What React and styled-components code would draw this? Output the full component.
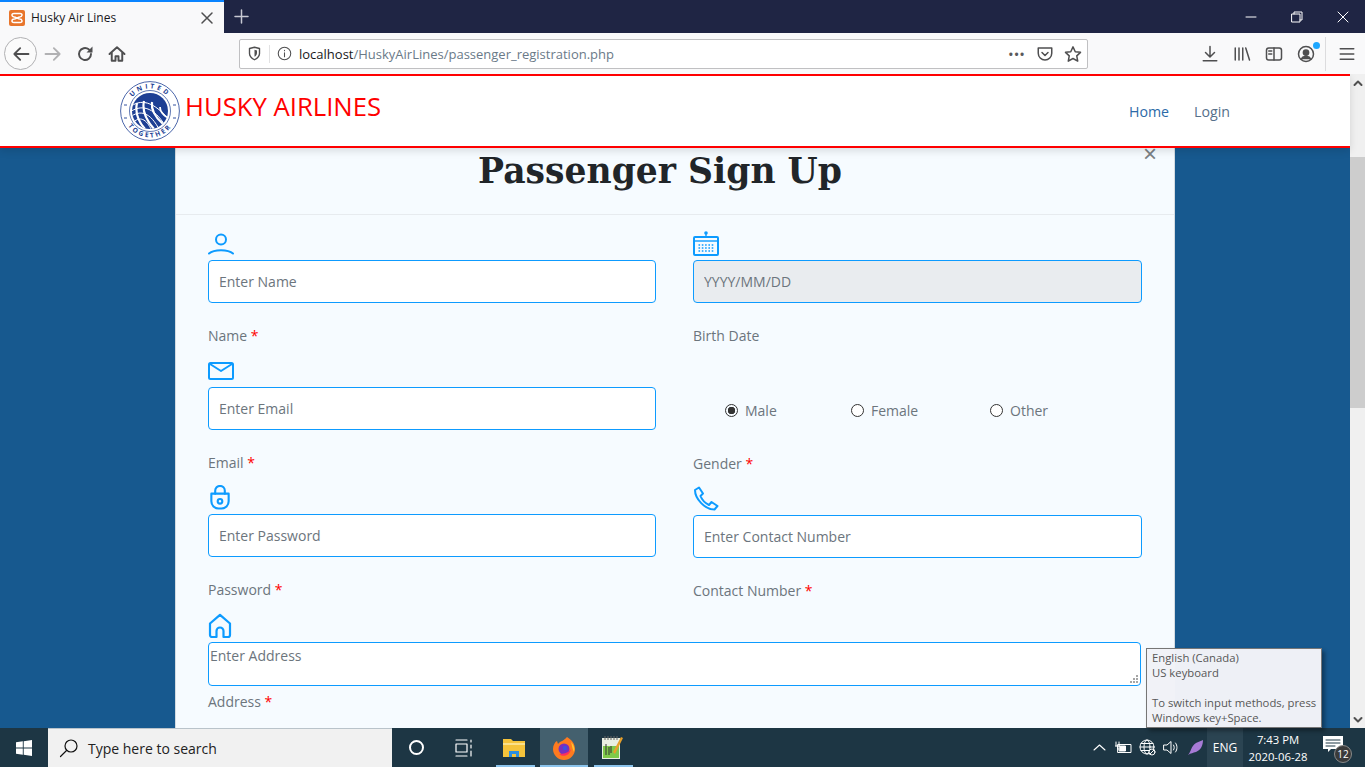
import styled, { createGlobalStyle } from "styled-components";

const BLUE = "#0d9bff";

const GlobalStyle = createGlobalStyle`
  html, body {
    margin: 0;
    padding: 0;
    overflow: hidden;
  }
  * {
    box-sizing: border-box;
  }
  body {
    font-family: "Open Sans", "Noto Sans", sans-serif;
  }
`;

function Ico({ size = 18, w, h, vb = "0 0 24 24", color = "#4f4f50", sw = 2, children }) {
  return (
    <svg
      width={w || size}
      height={h || size}
      viewBox={vb}
      fill="none"
      stroke={color}
      strokeWidth={sw}
      strokeLinecap="round"
      strokeLinejoin="round"
      style={{ display: "block", flex: "none" }}
    >
      {children}
    </svg>
  );
}

function XamppIcon() {
  return (
    <svg width="16" height="16" viewBox="0 0 16 16" style={{ display: "block", flex: "none" }}>
      <rect width="16" height="16" rx="2" fill="#e8752b" />
      <path
        d="M5 3.5 H11 M5 12.5 H11 M5 3.5 C2 3.5 2.5 7 5.5 7 M11 3.5 C14 3.5 13.5 7 10.5 7 M5 12.5 C2 12.5 2.5 9 5.5 9 M11 12.5 C14 12.5 13.5 9 10.5 9 M5.5 7 L10.5 9 M10.5 7 L5.5 9"
        fill="none"
        stroke="#fff"
        strokeWidth="1.5"
      />
    </svg>
  );
}

function GlobeLogo() {
  const navy = "#1d3f94";
  return (
    <svg width="60" height="60" viewBox="0 0 60 60" style={{ display: "block", flex: "none" }}>
      <defs>
        <path id="arcTop" d="M7.5 30 A22.5 22.5 0 0 1 52.5 30" />
        <path id="arcBottom" d="M3.5 30 A26.5 26.5 0 0 0 56.5 30" />
        <clipPath id="globeClip">
          <circle cx="30" cy="30" r="18" />
        </clipPath>
      </defs>
      <circle cx="30" cy="30" r="29.4" fill="#fff" stroke={navy} strokeWidth="0.8" />
      <circle cx="30" cy="30" r="20.5" fill="none" stroke={navy} strokeWidth="0.7" />
      <text fontFamily="Open Sans, sans-serif" fontSize="6.6" fontWeight="700" fill={navy} letterSpacing="2.6">
        <textPath href="#arcTop" startOffset="50%" textAnchor="middle">UNITED</textPath>
      </text>
      <text fontFamily="Open Sans, sans-serif" fontSize="6.6" fontWeight="700" fill={navy} letterSpacing="2.1">
        <textPath href="#arcBottom" startOffset="50%" textAnchor="middle">TOGETHER</textPath>
      </text>
      <circle cx="30" cy="30" r="18" fill={navy} />
      <g clipPath="url(#globeClip)" fill="none" stroke="#fff">
        <path d="M10 26 C20 18 33 19 50 40" strokeWidth="1" />
        <path d="M10 31 C20 24 33 24 46 46" strokeWidth="1" />
        <path d="M10 36 C20 29 30 30 40 50" strokeWidth="1" />
        <path d="M12 42 C20 35 26 37 32 50" strokeWidth="1" />
        <path d="M17 22 C15 31 18 40 25 48" strokeWidth="2.2" />
        <path d="M24 20 C22 29 26 39 34 48" strokeWidth="2.2" />
        <path d="M32 21 C31 28 35 36 43 43" strokeWidth="2.2" />
        <path d="M40 26 C40 30 43 34 48 37" strokeWidth="1.8" />
      </g>
      <path d="M4 37 h3 M53 37 h3 M4 24 h3 M53 24 h3" stroke={navy} strokeWidth="0.9" />
    </svg>
  );
}

function UserIcon() {
  return (
    <Ico w={26} h={22} vb="0 0 26 22" color={BLUE} sw={2}>
      <circle cx="13" cy="6.5" r="5" />
      <path d="M1 20.5 C6 16 20 16 25 20.5" />
    </Ico>
  );
}

function CalendarIcon() {
  return (
    <svg width="26" height="25" viewBox="0 0 26 25" style={{ display: "block" }}>
      <circle cx="13" cy="2" r="1.8" fill={BLUE} />
      <path d="M13 3 V6" stroke={BLUE} strokeWidth="1.4" />
      <rect x="1" y="6" width="24" height="18" rx="1" fill="none" stroke={BLUE} strokeWidth="2" />
      <path d="M1 10 H25" stroke={BLUE} strokeWidth="1.4" />
      <path d="M5.5 14 H21 M5.5 17 H21 M5.5 20 H21" stroke={BLUE} strokeWidth="1.6" strokeDasharray="1.6 1.7" />
    </svg>
  );
}

function MailIcon() {
  return (
    <Ico w={26} h={18} vb="0 0 26 18" color={BLUE} sw={2}>
      <rect x="1" y="1" width="24" height="16" rx="1.5" />
      <path d="M2 2 L13 9 L24 2" />
    </Ico>
  );
}

function LockIcon() {
  return (
    <Ico w={24} h={25} vb="0 0 24 26" color={BLUE} sw={2.2}>
      <path d="M7 9 V6 A5 5 0 0 1 17 6 V9" />
      <path d="M3 9 H21 V17 A7.5 7.5 0 0 1 13.5 24.5 H10.5 A7.5 7.5 0 0 1 3 17 Z" />
      <circle cx="12" cy="17" r="2.4" />
    </Ico>
  );
}

function PhoneIcon() {
  return (
    <Ico w={26} h={25} vb="0 0 26 25" color={BLUE} sw={2}>
      <path d="M2 4 L6 1.5 L10 7.5 L7.5 10 C9 14 12 17 16 19 L18.5 16 L24.5 20 L21.5 23.5 C12 23.5 2 13 2 4 Z" />
    </Ico>
  );
}

function HomeIcon() {
  return (
    <Ico w={24} h={26} vb="0 0 24 26" color={BLUE} sw={2.2}>
      <path d="M8.5 24 H4 A2 2 0 0 1 2 22 V10.5 L12 1.8 L22 10.5 V22 A2 2 0 0 1 20 24 H15.5 V18 A3.5 3.5 0 0 0 8.5 18 Z" />
    </Ico>
  );
}

function Field({ icon, placeholder, label, required, disabled }) {
  return (
    <FieldWrap>
      <IconSlot>{icon}</IconSlot>
      <TextInput placeholder={placeholder} readOnly $disabled={disabled} />
      <FieldLabel>
        {label}
        {required && <Req> *</Req>}
      </FieldLabel>
    </FieldWrap>
  );
}

export default function App() {
  return (
    <Root>
      <GlobalStyle />
      <TitleBar>
        <Tab>
          <XamppIcon />
          <TabTitle>Husky Air Lines</TabTitle>
          <Ico size={14} vb="0 0 14 14" sw={1.5}>
            <path d="M2 2 L12 12 M12 2 L2 12" />
          </Ico>
        </Tab>
        <NewTab>
          <Ico size={15} vb="0 0 15 15" color="#c7c9d3" sw={1.5}>
            <path d="M7.5 1 V14 M1 7.5 H14" />
          </Ico>
        </NewTab>
        <WinButtons>
          <WinBtn>
            <Ico size={12} vb="0 0 12 12" color="#fff" sw={1}>
              <path d="M1 6 H11" />
            </Ico>
          </WinBtn>
          <WinBtn>
            <Ico size={12} vb="0 0 12 12" color="#fff" sw={1}>
              <rect x="1" y="3" width="8" height="8" />
              <path d="M3 3 V1 H11 V9 H9" />
            </Ico>
          </WinBtn>
          <WinBtn>
            <Ico size={12} vb="0 0 12 12" color="#fff" sw={1}>
              <path d="M1 1 L11 11 M11 1 L1 11" />
            </Ico>
          </WinBtn>
        </WinButtons>
      </TitleBar>

      <Toolbar>
        <BackButton>
          <Ico size={20} sw={2.2}>
            <path d="M21 12 H4 M11 5 L4 12 L11 19" />
          </Ico>
        </BackButton>
        <ToolBtn>
          <Ico size={20} color="#b1b1b3" sw={2.2}>
            <path d="M3 12 H20 M13 5 L20 12 L13 19" />
          </Ico>
        </ToolBtn>
        <ToolBtn>
          <Ico size={18} sw={2.6}>
            <path d="M20 12 A8 8 0 1 1 17 5.8 L20 8.5" />
            <path d="M22 2 V10 H14 Z" fill="#4f4f50" stroke="none" />
          </Ico>
        </ToolBtn>
        <ToolBtn>
          <Ico size={18} sw={2.6}>
            <path d="M2 12 L12 3 L22 12 M5 10 V21 H10 V15 H14 V21 H19 V10" />
          </Ico>
        </ToolBtn>
        <UrlBar>
          <UrlLeft>
            <Ico size={15} sw={2.2}>
              <path d="M4 4 L12 2 L20 4 V12 C20 17 16 20 12 22 C8 20 4 17 4 12 Z" />
              <path d="M12 6 V17 C14 16 16 14 16 11 V7 Z" fill="#4f4f50" stroke="none" />
            </Ico>
            <UrlDivider />
            <Ico size={15} sw={1.7}>
              <circle cx="12" cy="12" r="10" />
              <path d="M12 11 V17 M12 7 V7.5" />
            </Ico>
          </UrlLeft>
          <UrlText>
            <UrlHost>localhost</UrlHost>/HuskyAirLines/passenger_registration.php
          </UrlText>
          <UrlRight>
            <Dots>•••</Dots>
            <Ico size={18}>
              <path d="M3 4 H21 V11 A9 9 0 0 1 3 11 Z" />
              <path d="M8 10 L12 14 L16 10" />
            </Ico>
            <Ico size={18}>
              <path d="M12 2.5 L15 9 L22 9.8 L17 14.5 L18.3 21.5 L12 18 L5.7 21.5 L7 14.5 L2 9.8 L9 9 Z" />
            </Ico>
          </UrlRight>
        </UrlBar>
        <ToolRight>
          <ToolRightBtn>
            <Ico size={18}>
              <path d="M12 2 V15 M6 10 L12 16 L18 10 M3 21 H21" />
            </Ico>
          </ToolRightBtn>
          <ToolRightBtn>
            <Ico size={18}>
              <path d="M3 4 V20 M8 4 V20 M13 4 V20 M17 4 L22 20" />
            </Ico>
          </ToolRightBtn>
          <ToolRightBtn>
            <Ico size={18}>
              <rect x="2" y="4" width="20" height="16" rx="3" />
              <path d="M12 4 V20 M5 8 H9 M5 12 H9" />
            </Ico>
          </ToolRightBtn>
          <ToolRightBtn>
            <Ico size={18}>
              <circle cx="12" cy="12" r="10" />
              <circle cx="12" cy="10" r="3.5" fill="#4f4f50" />
              <path d="M6 19 C7 14 17 14 18 19" fill="#4f4f50" />
            </Ico>
            <ProfileDot />
          </ToolRightBtn>
          <ToolSep />
          <MenuBtn>
            <Ico size={18}>
              <path d="M3 5 H21 M3 12 H21 M3 19 H21" />
            </Ico>
          </MenuBtn>
        </ToolRight>
      </Toolbar>

      <Viewport>
        <Page>
          <SiteHeader>
            <Brand>
              <GlobeLogo />
              <BrandName>HUSKY AIRLINES</BrandName>
            </Brand>
            <SiteNav>
              <NavLink $active>Home</NavLink>
              <NavLink>Login</NavLink>
            </SiteNav>
          </SiteHeader>
          <Modal>
            <ModalHeader>
              <ModalTitle>Passenger Sign Up</ModalTitle>
              <CloseBtn>×</CloseBtn>
            </ModalHeader>
            <ModalBody>
              <Columns>
                <Column>
                  <Field icon={<UserIcon />} placeholder="Enter Name" label="Name" required />
                  <Field icon={<MailIcon />} placeholder="Enter Email" label="Email" required />
                  <Field icon={<LockIcon />} placeholder="Enter Password" label="Password" required />
                </Column>
                <Column>
                  <Field icon={<CalendarIcon />} placeholder="YYYY/MM/DD" label="Birth Date" disabled />
                  <GenderField>
                    <Radios>
                      <RadioItem $w={126}>
                        <RadioDot $checked />
                        Male
                      </RadioItem>
                      <RadioItem $w={139}>
                        <RadioDot />
                        Female
                      </RadioItem>
                      <RadioItem>
                        <RadioDot />
                        Other
                      </RadioItem>
                    </Radios>
                    <GenderLabel>
                      Gender<Req> *</Req>
                    </GenderLabel>
                  </GenderField>
                  <Field icon={<PhoneIcon />} placeholder="Enter Contact Number" label="Contact Number" required />
                </Column>
              </Columns>
              <IconSlot>
                <HomeIcon />
              </IconSlot>
              <AddressBox>
                <AddressInput placeholder="Enter Address" readOnly />
                <ResizeGrip />
              </AddressBox>
              <AddressLabel>
                Address<Req> *</Req>
              </AddressLabel>
            </ModalBody>
          </Modal>
        </Page>
        <Scrollbar>
          <ScrollArrow>
            <Ico size={10} vb="0 0 10 10" color="#505050" sw={2}>
              <path d="M1.5 7 L5 3.5 L8.5 7" />
            </Ico>
          </ScrollArrow>
          <ScrollTrack>
            <ScrollThumb />
          </ScrollTrack>
          <ScrollArrow>
            <Ico size={10} vb="0 0 10 10" color="#505050" sw={2}>
              <path d="M1.5 3 L5 6.5 L8.5 3" />
            </Ico>
          </ScrollArrow>
        </Scrollbar>
      </Viewport>

      <Taskbar>
        <StartBtn>
          <svg width="16" height="16" viewBox="0 0 16 16" style={{ display: "block" }}>
            <path d="M0 2.3 L6.8 1.3 V7.5 H0 Z M7.7 1.2 L16 0 V7.5 H7.7 Z M0 8.4 H6.8 V14.7 L0 13.7 Z M7.7 8.4 H16 V16 L7.7 14.8 Z" fill="#fff" />
          </svg>
        </StartBtn>
        <SearchBox>
          <Ico size={20} vb="0 0 20 20" color="#111" sw={1.2}>
            <circle cx="12" cy="8" r="6" />
            <path d="M7.8 12.3 L1.5 18.5" />
          </Ico>
          <SearchText>Type here to search</SearchText>
        </SearchBox>
        <TaskIcons>
          <TaskApp>
            <CortanaRing />
          </TaskApp>
          <TaskApp>
            <Ico size={18} vb="0 0 18 18" color="#fff" sw={1.2}>
              <path d="M1 1 H12 M1 17 H12 M1 5 H12 V13 H1 Z M16 1 V3 M16 6 V9 M16 12 V17" />
            </Ico>
          </TaskApp>
          <ExplorerApp $open>
            <svg width="24" height="22" viewBox="0 0 24 22" style={{ display: "block" }}>
              <path d="M1 2 H9 L11 4 H23 V20 H1 Z" fill="#f5c33b" />
              <path d="M1 6 H23 V8 H1 Z" fill="#fbe08a" />
              <path d="M7 14 H17 V20 H14 V17 H10 V20 H7 Z" fill="#2d8fe0" />
            </svg>
          </ExplorerApp>
          <TaskApp $active>
            <svg width="24" height="24" viewBox="0 0 24 24" style={{ display: "block" }}>
              <path d="M15 1 C20 4 23 8 23 13 A11 11 0 0 1 1 13 C1 9 3 6 5 5 L6 8 C8 5 12 5 15 1 Z" fill="#ff7a1f" />
              <path d="M19 6 C22 9 23 12 22 16 C20 12 20 9 19 6 Z" fill="#ffc52e" />
              <circle cx="12" cy="13" r="5.5" fill="#7a2fbd" />
              <path d="M7 18 C12 22 18 19 19 13 C17 17 11 18 7 18 Z" fill="#ff2f5b" />
              <circle cx="13" cy="12" r="2.3" fill="#3f4fe0" />
            </svg>
          </TaskApp>
          <TaskApp $open>
            <svg width="22" height="25" viewBox="0 0 22 25" style={{ display: "block" }}>
              <rect x="1" y="3" width="18" height="21" fill="#e9efe2" />
              <rect x="2" y="11" width="16" height="12" fill="#7fca4a" />
              <path d="M4 1 V5 M7 1 V5 M10 1 V5 M13 1 V5 M16 1 V5" stroke="#666" strokeWidth="1" />
              <path d="M5 9 V20 M8 12 V20 M10 11 V18" stroke="#333" strokeWidth="1" />
              <path d="M12 17 L20 2 L22 3 L14 19 Z" fill="#e8a02a" />
            </svg>
          </TaskApp>
        </TaskIcons>
        <Tray>
          <TrayIcon>
            <Ico size={13} vb="0 0 13 13" color="#fff" sw={1.1}>
              <path d="M1 9 L6.5 4 L12 9" />
            </Ico>
          </TrayIcon>
          <TrayIcon>
            <Ico w={17} h={14} vb="0 0 17 14" color="#fff" sw={1}>
              <rect x="3" y="3.5" width="13" height="8" />
              <rect x="4.5" y="5" width="6" height="5" fill="#fff" />
              <path d="M1 1 V5 M4 1 V5 M0.5 5 H4.5 M2.5 5 V8 H4" />
            </Ico>
          </TrayIcon>
          <TrayIcon>
            <Ico size={17} vb="0 0 17 17" color="#fff" sw={1}>
              <circle cx="8" cy="8" r="7" />
              <ellipse cx="8" cy="8" rx="3" ry="7" />
              <path d="M1 8 H15 M2 4.5 H14 M2 11.5 H14" />
              <circle cx="13" cy="13" r="3" fill="#1d3644" />
              <path d="M11 15 L15 11" />
            </Ico>
          </TrayIcon>
          <TrayIcon>
            <Ico size={17} vb="0 0 17 17" color="#fff" sw={1}>
              <path d="M1 6 H4 L8 2.5 V14.5 L4 11 H1 Z M10.5 6 C11.5 7.5 11.5 9.5 10.5 11 M12.5 4 C14.5 6.5 14.5 10.5 12.5 13" />
            </Ico>
          </TrayIcon>
          <TrayIcon>
            <svg width="17" height="17" viewBox="0 0 17 17" style={{ display: "block" }}>
              <path d="M1 16 C4 13 4 7 9 4 C11 3 14 2 16 1 C16 6 14 11 9 13 C6 14 4 14 1 16 Z" fill="#a77bd6" />
            </svg>
          </TrayIcon>
          <LangBtn>ENG</LangBtn>
          <Clock>
            <span>7:43 PM</span>
            <span>2020-06-28</span>
          </Clock>
          <Notif>
            <Ico w={20} h={17} vb="0 0 20 17" color="#fff" sw={0}>
              <path d="M0 0 H20 V13 H8 L5 16 V13 H0 Z" fill="#fff" />
              <path d="M3 4 H17 M3 7 H17 M3 10 H12" stroke="#1d3644" strokeWidth="1" />
            </Ico>
            <NotifBadge>12</NotifBadge>
          </Notif>
        </Tray>
      </Taskbar>

      <LangTooltip>
        English (Canada)
        <br />
        US keyboard
        <br />
        <br />
        To switch input methods, press
        <br />
        Windows key+Space.
      </LangTooltip>
    </Root>
  );
}

const Root = styled.div`
  position: relative;
  width: 1365px;
  height: 767px;
  overflow: hidden;
  display: flex;
  flex-direction: column;
`;

const TitleBar = styled.div`
  height: 33px;
  background: #1f2544;
  display: flex;
  flex: none;
`;

const Tab = styled.div`
  width: 224px;
  background: #f9f9fa;
  border-top: 2px solid #0a84ff;
  display: flex;
  align-items: center;
  padding: 0 10px 0 9px;
  gap: 6px;
`;

const TabTitle = styled.span`
  flex: 1;
  font-size: 12px;
  color: #18181a;
`;

const NewTab = styled.div`
  width: 34px;
  display: flex;
  align-items: center;
  justify-content: center;
`;

const WinButtons = styled.div`
  margin-left: auto;
  display: flex;
`;

const WinBtn = styled.div`
  width: 46px;
  padding-left: 2px;
  display: flex;
  align-items: center;
  justify-content: center;
`;

const Toolbar = styled.div`
  height: 41px;
  flex: none;
  background: #f9f9fa;
  display: flex;
  align-items: center;
  padding-left: 4px;
`;

const BackButton = styled.div`
  width: 33px;
  height: 33px;
  border: 1px solid #b1b1b3;
  border-radius: 50%;
  background: #fbfbfb;
  display: flex;
  align-items: center;
  justify-content: center;
`;

const ToolBtn = styled.div`
  width: 32px;
  height: 32px;
  display: flex;
  align-items: center;
  justify-content: center;
`;

const UrlBar = styled.div`
  width: 849px;
  height: 30px;
  margin-left: 106px;
  background: #fff;
  border: 1px solid #c0c0c2;
  border-radius: 2px;
  display: flex;
  align-items: center;
  padding: 0 5px 0 7px;
`;

const UrlLeft = styled.div`
  display: flex;
  align-items: center;
  gap: 7px;
  width: 52px;
`;

const UrlDivider = styled.span`
  width: 1px;
  height: 18px;
  background: #e2e2e3;
`;

const UrlText = styled.div`
  flex: 1;
  font-size: 13px;
  color: #6a7a88;
  white-space: nowrap;
`;

const UrlHost = styled.span`
  color: #18181a;
`;

const UrlRight = styled.div`
  display: flex;
  align-items: center;
  gap: 10px;
`;

const Dots = styled.span`
  font-size: 15px;
  letter-spacing: 0;
  color: #5a5a5c;
  width: 18px;
  white-space: nowrap;
`;

const ToolRight = styled.div`
  display: flex;
  align-items: center;
  margin-left: 106px;
`;

const ToolRightBtn = styled.div`
  position: relative;
  width: 32px;
  height: 32px;
  display: flex;
  align-items: center;
  justify-content: center;
`;

const ProfileDot = styled.span`
  position: absolute;
  top: 4px;
  right: 2px;
  width: 7px;
  height: 7px;
  border-radius: 50%;
  background: #1ea7ff;
`;

const ToolSep = styled.span`
  width: 1px;
  height: 34px;
  margin-left: 3px;
  background: #dcdcde;
`;

const MenuBtn = styled(ToolRightBtn)`
  margin-left: 5px;
`;

const Viewport = styled.div`
  flex: 1;
  min-height: 0;
  display: flex;
  overflow: hidden;
`;

const Page = styled.div`
  flex: 1;
  min-width: 0;
  background: #17598f;
`;

const SiteHeader = styled.header`
  position: relative;
  z-index: 2;
  height: 74px;
  background: #fff;
  border-top: 2px solid #f00;
  border-bottom: 2px solid #f00;
  box-shadow: 0 3px 8px rgba(0, 0, 0, 0.12);
  display: flex;
  align-items: center;
  justify-content: space-between;
  padding: 0 120px;
`;

const Brand = styled.div`
  display: flex;
  align-items: center;
  gap: 5px;
`;

const BrandName = styled.span`
  position: relative;
  top: -5px;
  font-size: 25.7px;
  color: #f00;
  white-space: nowrap;
`;

const SiteNav = styled.nav`
  display: flex;
  gap: 25px;
`;

const NavLink = styled.a`
  font-size: 14.2px;
  color: ${(p) => (p.$active ? "#2c6aa8" : "#56708a")};
`;

const Modal = styled.section`
  width: 1000px;
  margin-left: 175px;
  background: #f6fbff;
  border-left: 1px solid #d3dbe2;
  border-right: 1px solid #d3dbe2;
`;

const ModalHeader = styled.div`
  position: relative;
  height: 67px;
  padding: 0 30px 20px 0;
  border-bottom: 1px solid #e7ebef;
  display: flex;
  align-items: center;
  justify-content: center;
`;

const ModalTitle = styled.h2`
  margin: 0;
  font-family: "DejaVu Serif", serif;
  font-weight: 700;
  font-size: 34.6px;
  line-height: 44px;
  color: #212529;
  white-space: nowrap;
`;

const CloseBtn = styled.span`
  position: absolute;
  top: -6px;
  right: 17px;
  font-family: "Liberation Sans", sans-serif;
  font-size: 24px;
  line-height: 24px;
  color: #7b7f84;
`;

const ModalBody = styled.div`
  padding: 18px 33px 60px 32px;
`;

const Columns = styled.div`
  display: grid;
  grid-template-columns: 448px 449px;
  column-gap: 37px;
`;

const Column = styled.div`
  display: flex;
  flex-direction: column;
`;

const FieldWrap = styled.div`
  height: 127px;
`;

const IconSlot = styled.div`
  height: 27px;
  padding-bottom: 6px;
  display: flex;
  align-items: center;
`;

const TextInput = styled.input`
  display: block;
  width: 100%;
  height: 43px;
  padding: 0 10px;
  border: 1px solid ${BLUE};
  border-radius: 4px;
  outline: none;
  font-family: inherit;
  font-size: 14px;
  background: ${(p) => (p.$disabled ? "#e9ecef" : "#fff")};

  &::placeholder {
    color: #6c757d;
    opacity: 1;
  }
`;

const FieldLabel = styled.label`
  display: block;
  margin-top: 23px;
  font-size: 14px;
  line-height: 20px;
  color: #6c757d;
`;

const Req = styled.span`
  color: #f00;
`;

const GenderField = styled.div`
  height: 128px;
  padding-top: 40px;
`;

const Radios = styled.div`
  display: flex;
  align-items: center;
  height: 20px;
  padding-left: 32px;
`;

const RadioItem = styled.label`
  width: ${(p) => (p.$w ? `${p.$w}px` : "auto")};
  display: flex;
  align-items: center;
  gap: 7px;
  font-size: 14px;
  color: #6c757d;
`;

const RadioDot = styled.span`
  width: 13px;
  height: 13px;
  flex: none;
  border: 1px solid #333;
  border-radius: 50%;
  background: ${(p) => (p.$checked ? "radial-gradient(circle, #333 0 3.5px, #f6fbff 4px)" : "#fff")};
`;

const GenderLabel = styled.div`
  margin-top: 34px;
  font-size: 14px;
  line-height: 20px;
  color: #6c757d;
`;

const AddressBox = styled.div`
  position: relative;
  width: 933px;
`;

const AddressInput = styled.textarea`
  display: block;
  width: 100%;
  height: 44px;
  padding: 3px 1px 1px;
  border: 1px solid ${BLUE};
  border-radius: 4px;
  outline: none;
  resize: none;
  font-family: inherit;
  font-size: 14px;
  background: #fff;

  &::placeholder {
    color: #6c757d;
    opacity: 1;
  }
`;

const ResizeGrip = styled.span`
  position: absolute;
  right: 3px;
  bottom: 3px;
  width: 8px;
  height: 8px;
  background:
    linear-gradient(#a6a6a6, #a6a6a6) 6px 0 / 2px 2px no-repeat,
    linear-gradient(#a6a6a6, #a6a6a6) 3px 3px / 2px 2px no-repeat,
    linear-gradient(#a6a6a6, #a6a6a6) 6px 3px / 2px 2px no-repeat,
    linear-gradient(#a6a6a6, #a6a6a6) 0 6px / 2px 2px no-repeat,
    linear-gradient(#a6a6a6, #a6a6a6) 3px 6px / 2px 2px no-repeat,
    linear-gradient(#a6a6a6, #a6a6a6) 6px 6px / 2px 2px no-repeat;
`;

const AddressLabel = styled.div`
  margin-top: 6px;
  font-size: 14px;
  line-height: 20px;
  color: #6c757d;
`;

const Scrollbar = styled.div`
  width: 15px;
  flex: none;
  background: #f0f0f0;
  display: flex;
  flex-direction: column;
`;

const ScrollArrow = styled.div`
  height: 17px;
  flex: none;
  display: flex;
  align-items: center;
  justify-content: center;
`;

const ScrollTrack = styled.div`
  flex: 1;
  padding-top: 66px;
`;

const ScrollThumb = styled.div`
  height: 251px;
  background: #cdcdcd;
`;

const Taskbar = styled.div`
  height: 39px;
  flex: none;
  background: #1d3644;
  display: flex;
  align-items: stretch;
`;

const StartBtn = styled.div`
  width: 48px;
  display: flex;
  align-items: center;
  justify-content: center;
`;

const SearchBox = styled.div`
  width: 344px;
  background: #f1f1f1;
  border-top: 1px solid #b9c3ca;
  display: flex;
  align-items: center;
  gap: 9px;
  padding-left: 11px;
`;

const SearchText = styled.span`
  font-size: 14px;
  color: #222;
`;

const TaskIcons = styled.div`
  display: flex;
`;

const TaskApp = styled.div`
  position: relative;
  width: 48px;
  display: flex;
  align-items: center;
  justify-content: center;
  background: ${(p) => (p.$active ? "#44606e" : "transparent")};

  &::after {
    content: "";
    position: absolute;
    left: ${(p) => (p.$active ? "0" : "6px")};
    right: ${(p) => (p.$active ? "0" : "3px")};
    bottom: 0;
    height: 2px;
    background: ${(p) => (p.$open || p.$active ? "#8cc4ec" : "transparent")};
  }
`;

const ExplorerApp = styled(TaskApp)`
  margin: 0 2px;
`;

const CortanaRing = styled.span`
  width: 15px;
  height: 15px;
  border: 2px solid #fff;
  border-radius: 50%;
`;

const Tray = styled.div`
  margin-left: auto;
  display: flex;
  align-items: stretch;
`;

const TrayIcon = styled.div`
  width: 24px;
  display: flex;
  align-items: center;
  justify-content: center;
`;

const LangBtn = styled.div`
  width: 36px;
  background: #2b4452;
  display: flex;
  align-items: center;
  justify-content: center;
  font-size: 12px;
  color: #fff;
`;

const Clock = styled.div`
  width: 70px;
  display: flex;
  flex-direction: column;
  align-items: center;
  justify-content: center;
  font-size: 11.3px;
  line-height: 17px;
  color: #fff;
`;

const Notif = styled.div`
  position: relative;
  width: 52px;
  display: flex;
  align-items: center;
  justify-content: center;
  padding: 0 12px 6px 0;
`;

const NotifBadge = styled.span`
  position: absolute;
  left: 21px;
  top: 17px;
  width: 18px;
  height: 18px;
  border-radius: 50%;
  background: #3a3a3a;
  border: 1px solid #8a8a8a;
  font-size: 10px;
  line-height: 16px;
  text-align: center;
  color: #fff;
`;

const LangTooltip = styled.div`
  position: absolute;
  left: 1146px;
  top: 648px;
  width: 176px;
  height: 80px;
  padding: 1px 5px;
  background: rgba(241, 242, 247, 0.99);
  border: 1px solid #767676;
  box-shadow: 3px 3px 4px rgba(0, 0, 0, 0.35);
  font-size: 11.3px;
  line-height: 15px;
  color: #575757;
  white-space: nowrap;
`;
